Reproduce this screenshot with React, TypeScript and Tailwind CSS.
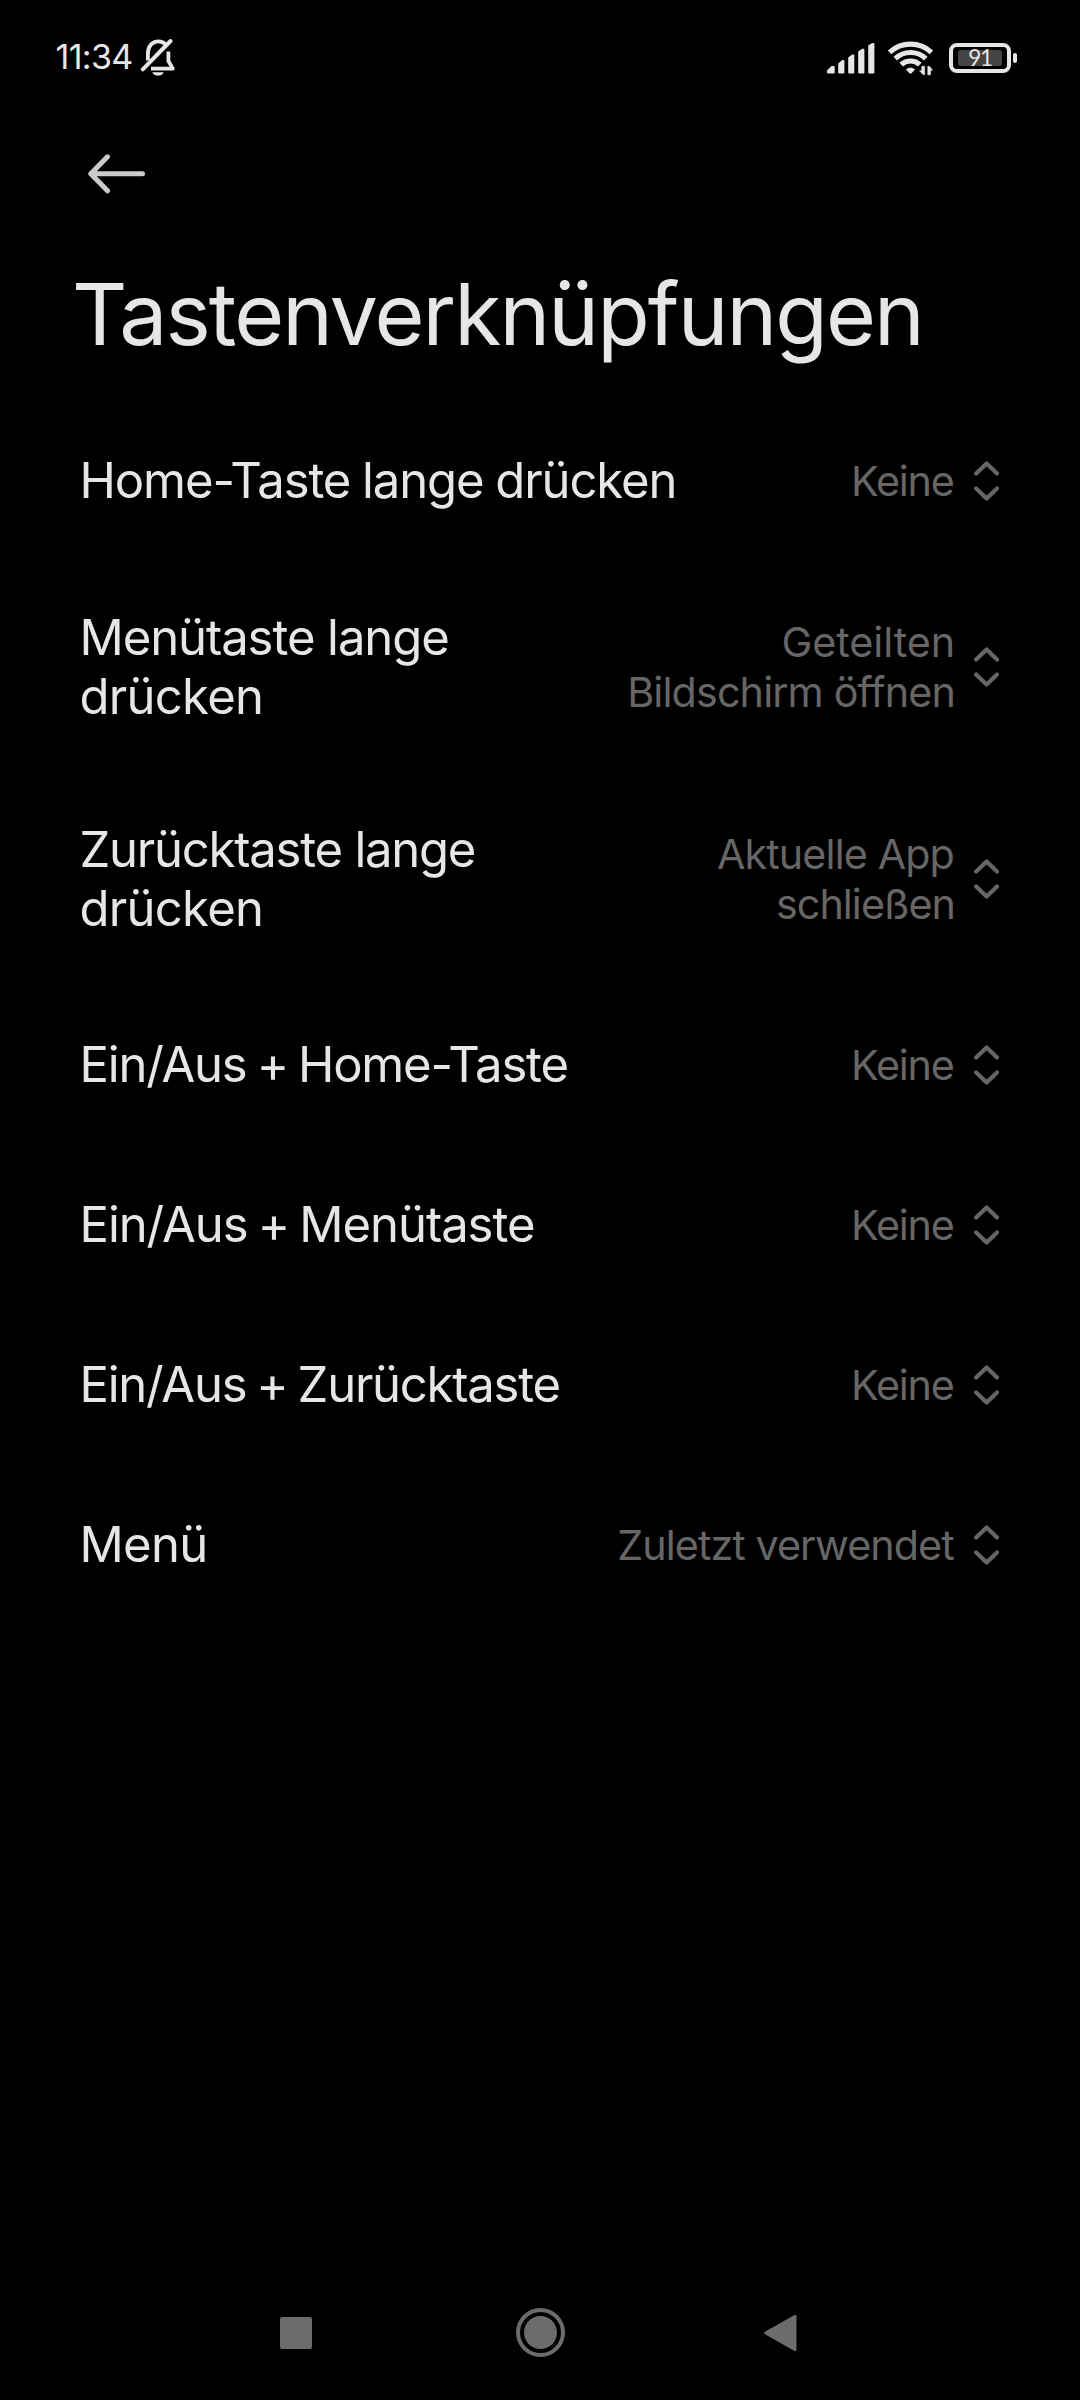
import React from "react";

type Line = { text: string; className: string };
type Shortcut = { label: Line[]; value: Line[] };

const keine: Line[] = [{ text: "Keine", className: "tracking-[-1.21px] pr-[2.4px]" }];

const shortcuts: Shortcut[] = [
  {
    label: [
      { text: "Home-Taste lange drücken", className: "tracking-[-1.09px] [word-spacing:-1px]" },
    ],
    value: keine,
  },
  {
    label: [
      { text: "Menütaste lange", className: "tracking-[-1.07px]" },
      { text: "drücken", className: "tracking-[-0.7px]" },
    ],
    value: [
      { text: "Geteilten", className: "tracking-[-0.07px] pr-px" },
      { text: "Bildschirm öffnen", className: "tracking-[-0.85px] pr-px" },
    ],
  },
  {
    label: [
      { text: "Zurücktaste lange", className: "tracking-[-1.23px]" },
      { text: "drücken", className: "tracking-[-0.7px]" },
    ],
    value: [
      { text: "Aktuelle App", className: "tracking-[-0.88px] pr-[2px]" },
      { text: "schließen", className: "tracking-[-0.95px] pr-px" },
    ],
  },
  {
    label: [
      { text: "Ein/Aus + Home-Taste", className: "tracking-[-1.19px] [word-spacing:-2.5px]" },
    ],
    value: keine,
  },
  {
    label: [
      { text: "Ein/Aus + Menütaste", className: "tracking-[-1.05px] [word-spacing:-2.5px]" },
    ],
    value: keine,
  },
  {
    label: [
      { text: "Ein/Aus + Zurücktaste", className: "tracking-[-1.23px] [word-spacing:-2.5px]" },
    ],
    value: keine,
  },
  {
    label: [{ text: "Menü", className: "tracking-[-0.7px]" }],
    value: [{ text: "Zuletzt verwendet", className: "tracking-[-0.93px] pr-[2.3px]" }],
  },
];

function BellOffIcon() {
  return (
    <svg className="h-[40px] w-[36px]" viewBox="0 0 36 40" fill="none">
      <path
        d="M7.9 22.5V15.4C7.9 8.4 12.2 3.3 18.3 3.3c3 0 5.700 1.200 7.600 3.400M28.400 13.500v9.500l4.400 7.600H11"
        stroke="#e6e6e6"
        strokeWidth="3.8"
        strokeLinejoin="round"
      />
      <path d="M2.800 31.300 30.500 3" stroke="#e6e6e6" strokeWidth="4" strokeLinecap="round" />
      <path d="M12.200 34.200h11.600c-1 2.200-3 3.400-5.800 3.400s-4.800-1.200-5.800-3.400Z" fill="#e6e6e6" />
    </svg>
  );
}

function SignalIcon() {
  return (
    <svg className="h-[32px] w-[50px]" viewBox="0 0 50 32" fill="#e6e6e6">
      <path d="M1 31.500Q0 31.500 0 30.500V28.500L4.500 24H6.700Q7.700 24 7.700 25V30.500Q7.700 31.500 6.700 31.500Z" />
      <path d="M12.200 31.500Q11.200 31.500 11.200 30.500V21.500L15.200 18H16.400Q17.400 18 17.400 19V30.500Q17.400 31.500 16.400 31.500Z" />
      <path d="M22.200 31.500Q21.200 31.500 21.200 30.500V15.500L25.200 12.500H26.300Q27.300 12.500 27.300 13.500V30.500Q27.300 31.500 26.300 31.500Z" />
      <path d="M32.200 31.500Q31.200 31.500 31.200 30.500V9.500L35.200 6.700H36.400Q37.400 6.700 37.400 7.700V30.500Q37.400 31.500 36.400 31.500Z" />
      <path d="M42.200 31.500Q41.200 31.500 41.200 30.500V3.500L45.200 1H46.400Q47.400 1 47.400 2V30.500Q47.400 31.500 46.400 31.500Z" />
    </svg>
  );
}

function WifiIcon() {
  return (
    <svg className="h-[36px] w-[48px]" viewBox="0 0 48 36" fill="none">
      <g stroke="#e6e6e6" strokeWidth="5.200">
        <path d="M2.600 12.300A31 31 0 0 1 44.400 12.300" />
        <path d="M8.300 18.600A22 22 0 0 1 38.700 18.600" />
        <path d="M14.200 24.700A13.500 13.500 0 0 1 32.800 24.700" />
      </g>
      <path
        d="M19 29.500C21.500 27 25.500 27 28 29.500L24.500 33.300Q23.500 34.200 22.500 33.300Z"
        fill="#e6e6e6"
      />
      <path
        d="M37.600 26.300V34.600H36L32.600 30.800H34.800V26.300ZM40.800 34.800V26.300H42.400L45.600 30.200H43.600V34.800Z"
        fill="#e6e6e6"
        stroke="#e6e6e6"
        strokeWidth="0.600"
      />
    </svg>
  );
}

function Battery() {
  return (
    <div className="flex items-center gap-[2px]">
      <div className="flex h-[30px] w-[62px] items-center justify-center rounded-[8px] border-4 border-[#e6e6e6]">
        <div className="flex h-[16px] w-[44px] items-center justify-center rounded-[2px] bg-[#444444] font-['Lato',sans-serif] text-[22.5px] leading-[16px] tracking-[-1.3px] text-[#e6e6e6]">
          91
        </div>
      </div>
      <div className="h-[10px] w-[4px] rounded-[2px] bg-[#e6e6e6]" />
    </div>
  );
}

function UpDownIcon() {
  return (
    <svg
      className="h-[40px] w-[25px] shrink-0"
      viewBox="0 0 25 40"
      fill="none"
      stroke="#666666"
      strokeWidth="4.200"
      strokeLinecap="round"
      strokeLinejoin="round"
    >
      <path d="M2.200 12.500 12.600 2.500 23 12.500M2.200 27.500 12.600 37.500 23 27.500" />
    </svg>
  );
}

function Row({ label, value }: Shortcut) {
  return (
    <li
      className={
        label.length > 1
          ? "flex h-[212px] items-center justify-between"
          : "flex h-[160px] items-center justify-between"
      }
    >
      <div className="pb-px text-[49px] leading-[59px] text-[#e6e6e6]">
        {label.map((l) => (
          <div key={l.text} className={l.className}>
            {l.text}
          </div>
        ))}
      </div>
      <div className="flex items-center gap-[18px]">
        <div className="text-right text-[41.26px] leading-[50px] text-[#666666]">
          {value.map((l) => (
            <div key={l.text} className={l.className}>
              {l.text}
            </div>
          ))}
        </div>
        <UpDownIcon />
      </div>
    </li>
  );
}

export default function App() {
  return (
    <div className="flex h-[2400px] w-[1080px] flex-col overflow-hidden whitespace-nowrap bg-black font-['Inter',sans-serif]">
      <header className="flex h-[115px] items-center justify-between pl-[55.5px] pr-[63px]">
        <div className="flex items-center gap-[7px]">
          <span className="pb-px text-[34px] leading-[40px] tracking-[-0.66px] text-[#e6e6e6]">
            11:34
          </span>
          <BellOffIcon />
        </div>
        <div className="flex items-center">
          <SignalIcon />
          <div className="pl-[10px] pr-[14px]">
            <WifiIcon />
          </div>
          <Battery />
        </div>
      </header>

      <div className="flex h-[117px] items-center pl-[88px]">
        <svg
          className="h-[40px] w-[58px]"
          viewBox="0 0 58 40"
          fill="none"
          stroke="#cccccc"
          strokeWidth="5"
          strokeLinecap="round"
          strokeLinejoin="round"
        >
          <path d="M54.500 19.800H3M19.500 2.800 2.800 19.800 19.500 36.800" />
        </svg>
      </div>

      <h1 className="mt-[30px] pl-[72px] text-[85.8px] leading-[105px] tracking-[-1.9px] text-[#e6e6e6]">
        Tastenverknüpfungen
      </h1>

      <ul className="mt-[34px] flex flex-col pl-[79.5px] pr-[81px]">
        {shortcuts.map((s) => (
          <Row key={s.label.map((l) => l.text).join(" ")} {...s} />
        ))}
      </ul>

      <nav className="mt-auto flex h-[135px] items-center justify-between pl-[280px] pr-[283px]">
        <div className="size-[32px] rounded-[2px] bg-[#6c6c6c]" />
        <div className="ml-[5px] flex size-[49px] items-center justify-center rounded-full border-4 border-[#6c6c6c]">
          <div className="size-[33px] rounded-full bg-[#6c6c6c]" />
        </div>
        <svg className="h-[38px] w-[33px]" viewBox="0 0 33 38" fill="#6c6c6c">
          <path d="M1 17.800 30 1.200Q32.500 0 32.500 2.500V35.500Q32.500 38 30 36.800L1 20.200Q-.5 19 1 17.800Z" />
        </svg>
      </nav>
    </div>
  );
}
